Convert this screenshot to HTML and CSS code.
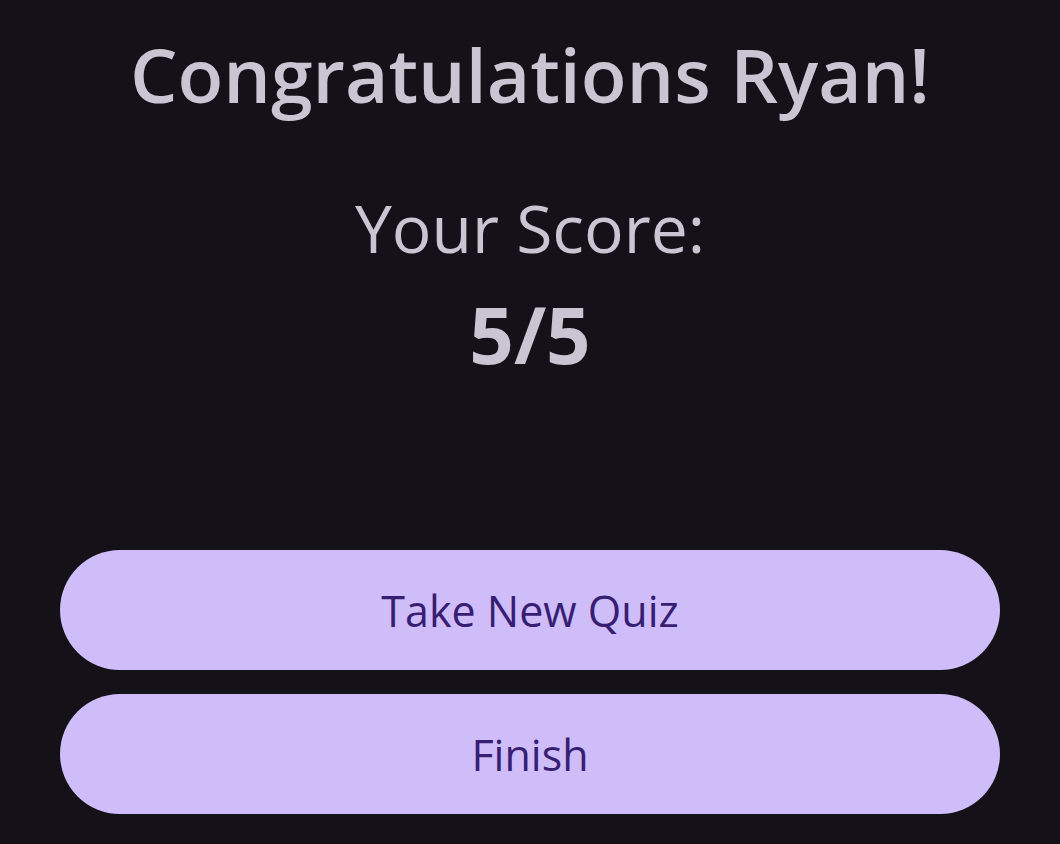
FILE: index.html
```html
<!DOCTYPE html>
<html lang="en">
<head>
<meta charset="utf-8">
<title>Quiz Result</title>
<link rel="stylesheet" href="styles.css">
</head>
<body>
<main class="screen">
  <h1 class="title">Congratulations Ryan!</h1>
  <p class="score-label">Your Score:</p>
  <p class="score-value">5/5</p>
  <div class="actions">
    <button class="btn">Take New Quiz</button>
    <button class="btn">Finish</button>
  </div>
</main>
</body>
</html>
```
FILE: styles.css
```css
html, body {
  margin: 0;
  padding: 0;
  background: #141218;
  height: 100%;
}
.screen {
  font-family: "Open Sans", "Noto Sans", sans-serif;
  color: #CAC5D3;
  display: flex;
  flex-direction: column;
  align-items: center;
  padding: 0 60px;
}
.title {
  margin: 26px 0 0;
  font-size: 75px;
  font-weight: 600;
  line-height: 96px;
}
.score-label {
  margin: 65px 0 0;
  font-size: 66px;
  font-weight: 400;
  line-height: 80px;
}
.score-value {
  margin: 27px 0 0;
  font-size: 78px;
  font-weight: 700;
  line-height: 80px;
}
.actions {
  margin-top: 176px;
  width: 100%;
  display: flex;
  flex-direction: column;
  gap: 24px;
}
.btn {
  height: 120px;
  border: none;
  border-radius: 60px;
  background: #CFBDFA;
  color: #381E72;
  font-family: "Open Sans", "Noto Sans", sans-serif;
  font-size: 43px;
  font-weight: 500;
}
```
